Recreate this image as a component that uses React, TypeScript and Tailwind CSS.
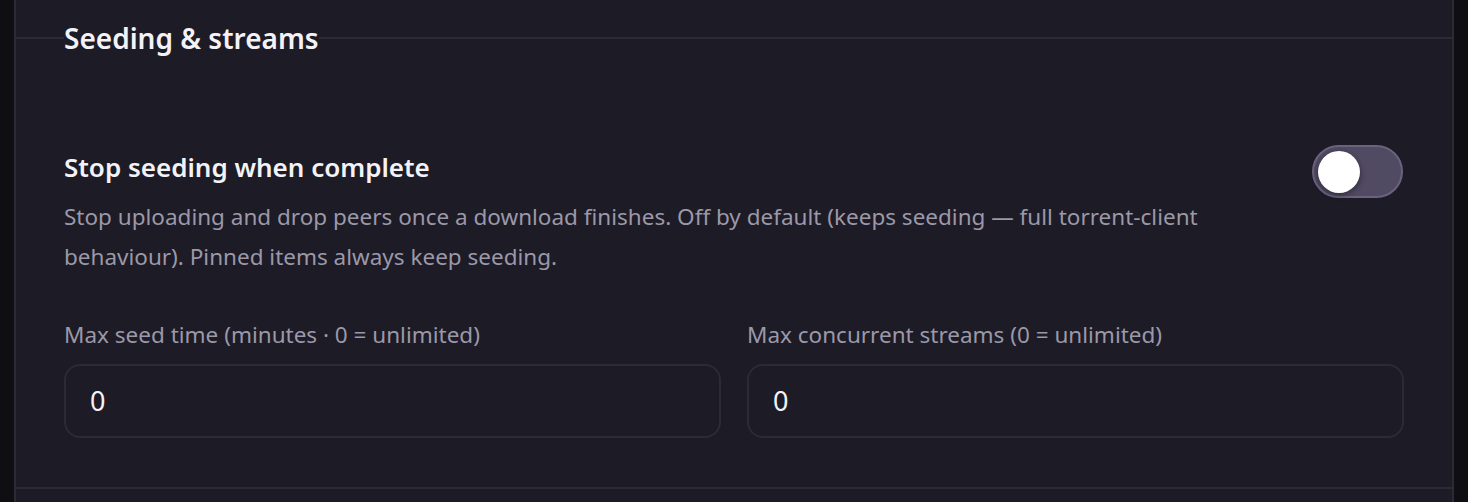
import React from "react";

export default function App() {
  return (
    <div className="min-h-screen bg-[#0f0e13] [font-family:'Noto_Sans',sans-serif]">
      <div className="mx-[14px] h-[502px] overflow-hidden border-x-2 border-[#2c2a37] bg-[#1d1b25] pt-[20px]">
        <fieldset className="border-x-0 border-y-2 border-[#2c2a37] px-[48px] pb-[49px]">
          <legend className="p-0 text-[28px] font-semibold leading-[36px] text-[#f3f2f7]">
            Seeding &amp; streams
          </legend>
          <div className="pt-[89px]">
            <div className="flex items-start justify-between gap-8">
              <div className="pt-[6px]">
                <div className="text-[26px] font-semibold leading-[32px] text-[#f3f2f7]">
                  Stop seeding when complete
                </div>
                <p className="mt-[14px] max-w-[1170px] text-[22.5px] leading-[40px] text-[#9b98a9]">
                  Stop uploading and drop peers once a download finishes. Off by default (keeps seeding — full
                  torrent-client behaviour). Pinned items always keep seeding.
                </p>
              </div>
              <button className="relative mr-px h-[53px] w-[91px] shrink-0 rounded-full border-2 border-[#6a6380] bg-[#514a63]">
                <span className="absolute left-[4px] top-[4px] h-[42px] w-[42px] rounded-full bg-white shadow-[0_2px_6px_rgba(0,0,0,0.45)]" />
              </button>
            </div>
            <div className="mt-[44px] grid grid-cols-2 gap-[26px]">
              <label className="flex flex-col gap-[15px]">
                <span className="text-[22.5px] leading-[28px] text-[#9b98a9]">
                  Max seed time (minutes · 0 = unlimited)
                </span>
                <div className="flex h-[74px] items-center rounded-[16px] border-2 border-[#2c2a37] px-[24px] text-[27px] text-[#f3f2f7]">
                  0
                </div>
              </label>
              <label className="flex flex-col gap-[15px]">
                <span className="text-[22.5px] leading-[28px] text-[#9b98a9]">
                  Max concurrent streams (0 = unlimited)
                </span>
                <div className="flex h-[74px] items-center rounded-[16px] border-2 border-[#2c2a37] px-[24px] text-[27px] text-[#f3f2f7]">
                  0
                </div>
              </label>
            </div>
          </div>
        </fieldset>
      </div>
    </div>
  );
}
